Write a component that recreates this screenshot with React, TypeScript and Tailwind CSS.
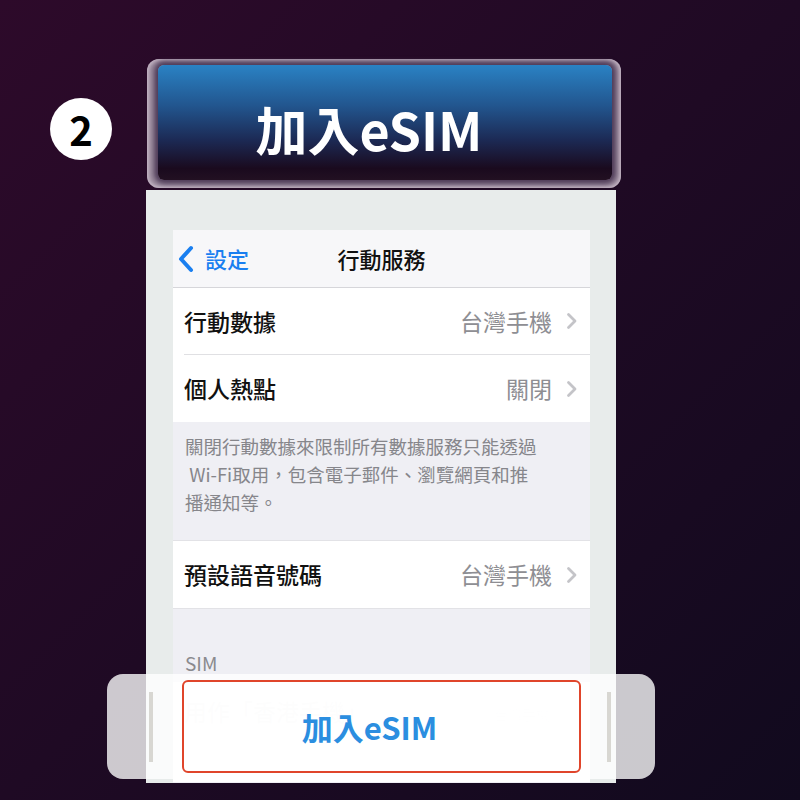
import React from "react";

const cjk = { fontFamily: '"Noto Sans CJK TC", "Noto Sans", sans-serif' };

function Chevron() {
  return (
    <svg width="12" height="18" viewBox="0 0 12 18" className="ml-[14px]">
      <path d="M2.5 2.5 L9 9 L2.5 15.5" fill="none" stroke="#c4c4c8" strokeWidth="2.8" strokeLinecap="round" strokeLinejoin="round" />
    </svg>
  );
}

function Row({ label, value, border }: { label: string; value?: string; border?: boolean }) {
  return (
    <div className="bg-white pl-[11px]">
      <div className={`flex items-center h-[67px] pr-[12px] ${border ? "border-b border-[#e0e0e3]" : ""}`}>
        <span className="text-[23px] font-medium text-[#111]">{label}</span>
        <span className="ml-auto text-[23px] text-[#8e8e93]">{value}</span>
        <Chevron />
      </div>
    </div>
  );
}

export default function App() {
  return (
    <div
      className="relative w-[800px] h-[800px] overflow-hidden bg-[linear-gradient(135deg,#2d0a2a_0%,#1f0a24_50%,#110a1e_100%)]"
      style={cjk}
    >
      <div className="flex items-center pt-[59px]">
        <div className="ml-[50px] mt-[11px] w-[62px] h-[62px] rounded-full bg-white flex items-center justify-center text-[40px] font-bold text-black leading-none">
          2
        </div>
        <div className="ml-[35px] w-[474px] h-[129px] rounded-[12px] bg-[#a090a2] pl-[11px] pr-[9px] pt-[6px] pb-[8px] shadow-[inset_0_0_3px_2px_rgba(200,185,200,0.8)]">
          <div className="w-full h-full rounded-[6px] bg-[linear-gradient(180deg,#2a82c4_0%,#22568f_35%,#1c2a55_65%,#1a0a1e_90%,#221022_100%)] shadow-[0_0_5px_4px_rgba(70,50,80,0.9)] flex items-center justify-center">
            <span className="text-[52px] font-bold text-white leading-none mt-[12px] -translate-x-[16px]">加入eSIM</span>
          </div>
        </div>
      </div>

      <div className="ml-[146px] mt-[2px] w-[470px] h-[593px] bg-[#e8eceb] pl-[27px] pr-[26px] pt-[40px]">
        <div className="bg-[#efeff4] h-full">
          <div className="relative h-[58px] bg-[#f7f7f9] border-b border-[#d6d6da] flex items-center">
            <svg width="18" height="28" viewBox="0 0 18 28" className="ml-[4px]">
              <path d="M14 3 L4 14 L14 25" fill="none" stroke="#1a7ff0" strokeWidth="4" strokeLinecap="round" strokeLinejoin="round" />
            </svg>
            <span className="ml-[10px] text-[22px] font-medium text-[#1a7ff0]">設定</span>
            <span className="absolute left-0 right-0 text-center text-[22px] font-medium text-[#111] pointer-events-none">行動服務</span>
          </div>
          <Row label="行動數據" value="台灣手機" border />
          <Row label="個人熱點" value="關閉" />
          <div className="pl-[12px] pr-[20px] pt-[10px] pb-[24px] text-[18.5px] leading-[28px] text-[#86868b] border-b border-[#e2e2e6]">
            <div>關閉行動數據來限制所有數據服務只能透過</div>
            <div>&nbsp;Wi-Fi取用，包含電子郵件、瀏覽網頁和推</div>
            <div>播通知等。</div>
          </div>
          <Row label="預設語音號碼" value="台灣手機" />
          <div className="border-t border-[#e2e2e6] h-[74px] pl-[12px] pt-[42px] text-[19px] leading-[24px] text-[#8a8a8e]">SIM</div>
          <div className="bg-white h-[100px] pl-[11px] flex items-start pt-[12px]">
            <span className="text-[23px] font-medium text-[#111]">用作「香港手機」</span>
            <span className="ml-auto mt-[10px] mr-[40px] text-[14px] text-[#8e8e93]">台灣手機</span>
          </div>
        </div>
      </div>

      <div className="absolute left-[107px] top-[674px] w-[548px] h-[105px] rounded-[16px] bg-white/[0.78]">
        <div className="absolute left-[42px] top-[18px] w-[4px] h-[70px] bg-[#d8d7d2]" />
        <div className="absolute left-[500px] top-[18px] w-[4px] h-[70px] bg-[#d8d7d2]" />
        <div className="absolute left-[75px] top-[6px] w-[399px] h-[93px] rounded-[6px] border-2 border-[#e0452b] bg-white/[0.96] flex items-center justify-center">
          <span className="text-[31px] font-bold text-[#2b8ee0] leading-none -translate-x-[12px]">加入eSIM</span>
        </div>
      </div>
    </div>
  );
}
